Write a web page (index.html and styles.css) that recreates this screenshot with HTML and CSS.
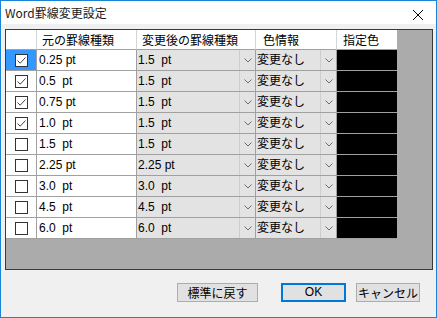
FILE: index.html
```html
<!DOCTYPE html>
<html lang="ja">
<head>
<meta charset="utf-8">
<title>Word罫線変更設定</title>
<link rel="stylesheet" href="styles.css">
</head>
<body>
<div class="window">
  <div class="titlebar">
    <span class="title">Word罫線変更設定</span>
    <svg class="close" width="12" height="12" viewBox="0 0 12 12"><path d="M1 1L11 11M11 1L1 11" stroke="#000" stroke-width="1" fill="none"/></svg>
  </div>
  <div class="body">
    <div class="frame">
      <div class="grid">
        <div class="hc"></div>
        <div class="hc hc-src">元の罫線種類</div>
        <div class="hc hc-dst">変更後の罫線種類</div>
        <div class="hc hc-clr">色情報</div>
        <div class="hc hc-col">指定色</div>

        <div class="cell chk sel"><span class="box on"><svg viewBox="0 0 13 13"><path d="M2.5 6.5L5.2 9.2L10.5 3.5"/></svg></span></div>
        <div class="cell src">0.25 pt</div>
        <div class="cell dd"><span class="val">1.5  pt</span><span class="arr"><svg viewBox="0 0 8 5"><path d="M0.5 0.5L4 4L7.5 0.5"/></svg></span></div>
        <div class="cell dd"><span class="val">変更なし</span><span class="arr"><svg viewBox="0 0 8 5"><path d="M0.5 0.5L4 4L7.5 0.5"/></svg></span></div>
        <div class="cell swatch"></div>

        <div class="cell chk"><span class="box on"><svg viewBox="0 0 13 13"><path d="M2.5 6.5L5.2 9.2L10.5 3.5"/></svg></span></div>
        <div class="cell src">0.5  pt</div>
        <div class="cell dd"><span class="val">1.5  pt</span><span class="arr"><svg viewBox="0 0 8 5"><path d="M0.5 0.5L4 4L7.5 0.5"/></svg></span></div>
        <div class="cell dd"><span class="val">変更なし</span><span class="arr"><svg viewBox="0 0 8 5"><path d="M0.5 0.5L4 4L7.5 0.5"/></svg></span></div>
        <div class="cell swatch"></div>

        <div class="cell chk"><span class="box on"><svg viewBox="0 0 13 13"><path d="M2.5 6.5L5.2 9.2L10.5 3.5"/></svg></span></div>
        <div class="cell src">0.75 pt</div>
        <div class="cell dd"><span class="val">1.5  pt</span><span class="arr"><svg viewBox="0 0 8 5"><path d="M0.5 0.5L4 4L7.5 0.5"/></svg></span></div>
        <div class="cell dd"><span class="val">変更なし</span><span class="arr"><svg viewBox="0 0 8 5"><path d="M0.5 0.5L4 4L7.5 0.5"/></svg></span></div>
        <div class="cell swatch"></div>

        <div class="cell chk"><span class="box on"><svg viewBox="0 0 13 13"><path d="M2.5 6.5L5.2 9.2L10.5 3.5"/></svg></span></div>
        <div class="cell src">1.0  pt</div>
        <div class="cell dd"><span class="val">1.5  pt</span><span class="arr"><svg viewBox="0 0 8 5"><path d="M0.5 0.5L4 4L7.5 0.5"/></svg></span></div>
        <div class="cell dd"><span class="val">変更なし</span><span class="arr"><svg viewBox="0 0 8 5"><path d="M0.5 0.5L4 4L7.5 0.5"/></svg></span></div>
        <div class="cell swatch"></div>

        <div class="cell chk"><span class="box"></span></div>
        <div class="cell src">1.5  pt</div>
        <div class="cell dd"><span class="val">1.5  pt</span><span class="arr"><svg viewBox="0 0 8 5"><path d="M0.5 0.5L4 4L7.5 0.5"/></svg></span></div>
        <div class="cell dd"><span class="val">変更なし</span><span class="arr"><svg viewBox="0 0 8 5"><path d="M0.5 0.5L4 4L7.5 0.5"/></svg></span></div>
        <div class="cell swatch"></div>

        <div class="cell chk"><span class="box"></span></div>
        <div class="cell src">2.25 pt</div>
        <div class="cell dd"><span class="val">2.25 pt</span><span class="arr"><svg viewBox="0 0 8 5"><path d="M0.5 0.5L4 4L7.5 0.5"/></svg></span></div>
        <div class="cell dd"><span class="val">変更なし</span><span class="arr"><svg viewBox="0 0 8 5"><path d="M0.5 0.5L4 4L7.5 0.5"/></svg></span></div>
        <div class="cell swatch"></div>

        <div class="cell chk"><span class="box"></span></div>
        <div class="cell src">3.0  pt</div>
        <div class="cell dd"><span class="val">3.0  pt</span><span class="arr"><svg viewBox="0 0 8 5"><path d="M0.5 0.5L4 4L7.5 0.5"/></svg></span></div>
        <div class="cell dd"><span class="val">変更なし</span><span class="arr"><svg viewBox="0 0 8 5"><path d="M0.5 0.5L4 4L7.5 0.5"/></svg></span></div>
        <div class="cell swatch"></div>

        <div class="cell chk"><span class="box"></span></div>
        <div class="cell src">4.5  pt</div>
        <div class="cell dd"><span class="val">4.5  pt</span><span class="arr"><svg viewBox="0 0 8 5"><path d="M0.5 0.5L4 4L7.5 0.5"/></svg></span></div>
        <div class="cell dd"><span class="val">変更なし</span><span class="arr"><svg viewBox="0 0 8 5"><path d="M0.5 0.5L4 4L7.5 0.5"/></svg></span></div>
        <div class="cell swatch"></div>

        <div class="cell chk"><span class="box"></span></div>
        <div class="cell src">6.0  pt</div>
        <div class="cell dd"><span class="val">6.0  pt</span><span class="arr"><svg viewBox="0 0 8 5"><path d="M0.5 0.5L4 4L7.5 0.5"/></svg></span></div>
        <div class="cell dd"><span class="val">変更なし</span><span class="arr"><svg viewBox="0 0 8 5"><path d="M0.5 0.5L4 4L7.5 0.5"/></svg></span></div>
        <div class="cell swatch"></div>
      </div>
    </div>
    <div class="buttons">
      <button class="btn btn-reset">標準に戻す</button>
      <button class="btn btn-ok">OK</button>
      <button class="btn btn-cancel">キャンセル</button>
    </div>
  </div>
</div>
</body>
</html>
```

FILE: styles.css
```css
html, body {
  margin: 0;
  padding: 0;
  background: #f0f0f0;
}

.window {
  width: 437px;
  height: 318px;
  box-sizing: border-box;
  border: 1px solid #1883d7;
  background: #f0f0f0;
  display: flex;
  flex-direction: column;
  font-family: "Liberation Sans", "Noto Sans CJK JP", sans-serif;
  font-size: 12px;
  color: #000;
}

.titlebar {
  height: 23px;
  background: #fff;
  display: flex;
  align-items: center;
  justify-content: space-between;
  padding-left: 4px;
  padding-right: 12px;
}

.title {
  font-family: "Noto Sans CJK JP", "Liberation Sans", sans-serif;
  font-size: 12px;
  line-height: 14px;
  color: #1a1a1a;
}

.close {
  display: block;
  margin-top: 4px;
}

.body {
  flex: 1;
  display: flex;
  flex-direction: column;
  padding: 5px 3px 0 4px;
}

.frame {
  width: 428px;
  height: 241px;
  box-sizing: border-box;
  border: 1px solid #3a3a3a;
  background: #ababab;
}

.grid {
  display: grid;
  grid-template-columns: 31px 100px 119px 81px 60px;
  grid-template-rows: 20px repeat(9, 21px);
  width: 391px;
}

.hc {
  background: #fff;
  box-sizing: border-box;
  border-right: 1px solid #d5d5d5;
  border-bottom: 1px solid #a0a0a0;
  font-family: "Noto Sans CJK JP", sans-serif;
  line-height: 19px;
  white-space: nowrap;
  overflow: hidden;
}

.hc-src, .hc-dst { padding-left: 5px; }
.hc-clr { padding-left: 7px; }
.hc-col { padding-left: 6px; border-right: none; }

.cell {
  box-sizing: border-box;
  border-bottom: 1px solid #a0a0a0;
  border-right: 1px solid #a0a0a0;
  white-space: pre;
  line-height: 20px;
  overflow: hidden;
}

.chk {
  background: #fff;
  display: flex;
  align-items: center;
  justify-content: center;
  padding-left: 1px;
}

.chk.sel {
  background: #3399ff;
}

.box {
  width: 13px;
  height: 13px;
  box-sizing: border-box;
  border: 1px solid #333;
  background: #fff;
  display: block;
  position: relative;
}

.box svg {
  position: absolute;
  left: -1px;
  top: -1px;
  width: 13px;
  height: 13px;
}

.box svg path {
  fill: none;
  stroke: #444;
  stroke-width: 1;
}

.src {
  background: #fff;
  padding-left: 2px;
}

.dd {
  background: #e3e3e3;
  display: flex;
}

.dd .val {
  flex: 1;
  padding-left: 1px;
  font-family: "Liberation Sans", "Noto Sans CJK JP", sans-serif;
}

.dd .arr {
  width: 16px;
  box-sizing: border-box;
  border-left: 1px solid #cdcdcd;
  display: flex;
  align-items: center;
  justify-content: center;
}

.arr svg {
  width: 8px;
  height: 5px;
}

.arr svg path {
  fill: none;
  stroke: #6e6e6e;
  stroke-width: 1;
}

.swatch {
  background: #000;
  border-right: none;
}

.buttons {
  display: flex;
  justify-content: flex-end;
  margin-top: 13px;
  padding-right: 13px;
}

.btn {
  height: 19px;
  box-sizing: border-box;
  background: #e1e1e1;
  border: 1px solid #adadad;
  font-family: "Noto Sans CJK JP", "Liberation Sans", sans-serif;
  font-size: 12px;
  line-height: 15px;
  padding: 0;
  color: #000;
}

.btn-reset {
  width: 81px;
  margin-right: 23px;
}

.btn-ok {
  width: 65px;
  margin-right: 10px;
  border: 2px solid #0078d7;
  font-family: "Liberation Sans", sans-serif;
}

.btn-cancel {
  width: 64px;
}
```
